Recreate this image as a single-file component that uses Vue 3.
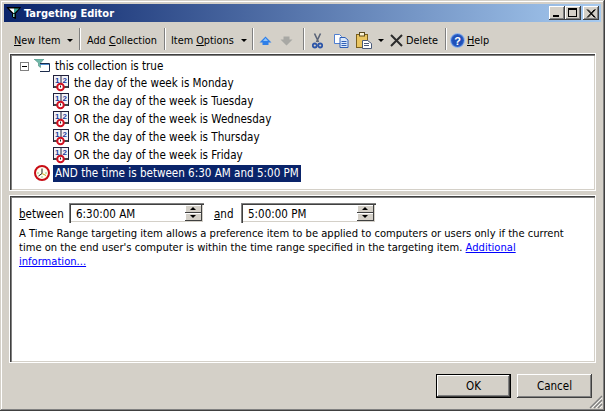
<script setup>
const days = [
  'the day of the week is Monday',
  'OR the day of the week is Tuesday',
  'OR the day of the week is Wednesday',
  'OR the day of the week is Thursday',
  'OR the day of the week is Friday'
]
</script>

<template>
  <div class="win">
    <div class="title">
      <svg class="ticon" width="16" height="16" viewBox="0 0 16 16">
        <path d="M1 2.500h13.500L9.500 8.500v5L6.500 12V8.500z" fill="#000" stroke="#000" stroke-width="1"/>
        <path d="M3 3.500h5L8 8.500z" fill="#fff"/>
        <path d="M8 3.500h5L8 8.500z" fill="#38a898"/>
        <path d="M7 9h1.500v3H7z" fill="#7fd0c0"/>
      </svg>
      <span class="ttext">Targeting Editor</span>
      <div class="wbtns">
        <span class="wb"><i class="wmin"></i></span>
        <span class="wb"><i class="wmax"></i></span>
        <span class="wb close">
          <svg width="10" height="9" viewBox="0 0 10 9"><path d="M1 0.500L8.500 8.500M2 0.500L9.500 8.500M8.500 0.500L1 8.500M9.500 0.500L2 8.500" stroke="#000" stroke-width="1"/></svg>
        </span>
      </div>
    </div>

    <div class="toolbar">
      <span class="tb w1"><span><u>N</u>ew Item</span><i class="caret"></i></span>
      <span class="sep"></span>
      <span class="tb w2"><span>Add <u>C</u>ollection</span></span>
      <span class="sep"></span>
      <span class="tb w3"><span>Item <u>O</u>ptions</span><i class="caret"></i></span>
      <span class="sep"></span>
      <span class="tb w4">
        <svg width="13" height="10" viewBox="0 0 13 10"><path d="M6.500 0.500L12.500 6.500H9.500V9H3.500V6.500H0.500z" fill="#2f7fe8"/><path d="M6.500 2L9 5H4z" fill="#8fc4fa"/></svg>
        <svg width="13" height="10" viewBox="0 0 13 10"><path d="M3.500 0.500H9.500V3.500H12.500L6.500 9.500L0.500 3.500H3.500z" fill="#a8a8a4"/></svg>
      </span>
      <span class="sep"></span>
      <span class="tb w5">
        <svg class="ic" width="11" height="16" viewBox="0 0 11 16">
          <path d="M2.500 0.500L6.500 9M8.500 0.500L4.500 9" stroke="#5a6478" stroke-width="1.600" fill="none"/>
          <circle cx="2.800" cy="12.500" r="2" fill="none" stroke="#2d55a8" stroke-width="1.800"/>
          <circle cx="8.200" cy="12.500" r="2" fill="none" stroke="#2d55a8" stroke-width="1.800"/>
        </svg>
        <svg class="ic2" width="15" height="14" viewBox="0 0 15 14">
          <path d="M0.500 0.500H5.500L7.500 2.500V9.500H0.500z" fill="#fff" stroke="#4f7fd0"/>
          <path d="M6 3.500H11L14 6V13.500H6z" fill="#dbe9fb" stroke="#2f5fb5"/>
          <path d="M7.500 7.500H12.500M7.500 9.500H12.500M7.500 11.500H12.500" stroke="#2f5fb5"/>
        </svg>
        <svg class="ic3" width="16" height="17" viewBox="0 0 16 17">
          <rect x="0.500" y="2.500" width="11" height="13" fill="#eac560" stroke="#7a5f1c"/>
          <rect x="3.500" y="0.500" width="5" height="3.500" fill="#fbf3d2" stroke="#5a4a20"/>
          <path d="M6.500 8.500H11.500L15.500 11.500V16.500H6.500z" fill="#fff" stroke="#4a5a78"/>
          <path d="M8 11.500H13M8 13.500H13" stroke="#4a5a78"/>
        </svg>
        <i class="caret c2"></i>
        <svg class="ic4" width="13" height="13" viewBox="0 0 13 13"><path d="M1 1L12 12M12 1L1 12" stroke="#2c2c2c" stroke-width="2"/></svg>
        <span class="del">Delete</span>
      </span>
      <span class="sep"></span>
      <span class="tb w6">
        <svg width="15" height="15" viewBox="0 0 15 15">
          <circle cx="7.500" cy="7.500" r="7" fill="#2d62c8" stroke="#9dbcec" stroke-width="1"/>
          <circle cx="7.500" cy="7.500" r="5.300" fill="#1f4fb8"/>
          <text x="7.500" y="11.500" text-anchor="middle" font-size="11" font-weight="700" fill="#fff" font-family="Liberation Sans">?</text>
        </svg>
        <span class="help"><u>H</u>elp</span>
      </span>
    </div>

    <div class="body">
      <div class="panel tree">
        <div class="row root">
          <span class="expander"><i></i></span>
          <svg class="coll" width="16" height="13" viewBox="0 0 16 13">
            <path d="M0 0H10L6.500 4V8.500L4.500 7V4z" fill="#6fb8a8" stroke="#4d8c80" stroke-width="0.600"/>
            <path d="M6 4.500H15.500V12.500H6" fill="none" stroke="#1c2c4c" stroke-width="1"/>
            <path d="M6 5.500H15" stroke="#4f8fd0" stroke-width="1"/>
          </svg>
          <span class="lbl root-lbl">this collection is true</span>
        </div>
        <div v-for="d in days" :key="d" class="row item">
          <svg class="cal" width="16" height="17" viewBox="0 0 16 17">
            <rect x="0.500" y="0.500" width="15" height="12" fill="#f2f2f6" stroke="#20203c"/>
            <path d="M8 0.500V12.500" stroke="#20203c"/>
            <rect x="1" y="11" width="14" height="2" fill="#444"/>
            <text x="4.300" y="8" text-anchor="middle" font-size="8" font-weight="700" fill="#1c3c9c" font-family="Liberation Sans">1</text>
            <text x="11.800" y="8" text-anchor="middle" font-size="8" font-weight="700" fill="#1c3c9c" font-family="Liberation Sans">2</text>
            <circle cx="7.500" cy="12" r="3.300" fill="#fff" stroke="#d01020" stroke-width="2"/>
            <path d="M7.500 10.500V12.500" stroke="#222"/>
          </svg>
          <span class="lbl">{{ d }}</span>
        </div>
        <div class="row last">
          <svg class="clock" width="18" height="18" viewBox="0 0 18 18">
            <circle cx="9" cy="9" r="7" fill="#fffef0" stroke="#c80c14" stroke-width="2"/>
            <path d="M9 4.500V9.500L5.500 12" stroke="#202020" stroke-width="1" fill="none"/>
            <path d="M9 9.500L13 11.500" stroke="#c8a820" stroke-width="1" fill="none"/>
            <path d="M8.500 12.500h1v1h-1zM12.500 8.500h1v1h-1zM4.500 8.500h1v1h-1z" fill="#20a020"/>
          </svg>
          <span class="lbl sel">AND the time is between 6:30 AM and 5:00 PM</span>
        </div>
      </div>

      <div class="panel detail">
        <div class="fields">
          <span class="flab f1"><u>b</u>etween</span>
          <span class="spin"><span class="val">6:30:00 AM</span><span class="arrows"><b class="up"></b><b class="down"></b></span></span>
          <span class="flab f2"><u>a</u>nd</span>
          <span class="spin"><span class="val">5:00:00 PM</span><span class="arrows"><b class="up"></b><b class="down"></b></span></span>
        </div>
        <p class="desc">A Time Range targeting item allows a preference item to be applied to computers or users only if the current time on the end user's computer is within the time range specified in the targeting item. <a>Additional information...</a></p>
      </div>

      <div class="foot">
        <button class="btn ok">OK</button>
        <button class="btn">Cancel</button>
      </div>
    </div>
    <svg class="grip" width="14" height="14" viewBox="0 0 14 14">
      <path d="M13 1L1 13M13 5L5 13M13 9L9 13" stroke="#808080" stroke-width="1.400"/>
      <path d="M13 3L3 13M13 7L7 13M13 11L11 13" stroke="#fff" stroke-width="0.800"/>
    </svg>
  </div>
</template>

<style scoped>
.win {
  position: relative;
  box-sizing: border-box;
  width: 605px;
  height: 411px;
  padding: 4px;
  background: #d4d0c8;
  box-shadow: inset -1px -1px 0 #404040, inset 1px 1px 0 #d4d0c8, inset -2px -2px 0 #808080, inset 2px 2px 0 #fff;
  font-family: "DejaVu Sans", "Open Sans", sans-serif;
  font-stretch: condensed;
  font-size: 11.500px;
  color: #000;
  display: flex;
  flex-direction: column;
}
.title {
  height: 18px;
  background: linear-gradient(90deg, #0a246a, #a6caf0);
  display: flex;
  align-items: center;
  flex-shrink: 0;
}
.ticon { margin: 0 2px 0 2px; }
.ttext { color: #fff; font-weight: 700; font-size: 11px; }
.wbtns { margin-left: auto; display: flex; margin-right: 2px; }
.wb {
  box-sizing: border-box;
  width: 16px;
  height: 14px;
  background: #d4d0c8;
  box-shadow: inset -1px -1px 0 #404040, inset 1px 1px 0 #fff, inset -2px -2px 0 #808080;
  display: flex;
  align-items: center;
  justify-content: center;
  position: relative;
}
.wb.close { margin-left: 2px; }
.wmin { position: absolute; left: 4px; bottom: 3px; width: 6px; height: 2px; background: #000; }
.wmax { width: 9px; height: 9px; box-sizing: border-box; border: 1px solid #000; border-top-width: 2px; margin: -1px 0 0 -1px; }
.toolbar {
  height: 28px;
  margin-top: 3px;
  display: flex;
  align-items: center;
  flex-shrink: 0;
  font-size: 10.800px;
}
.tb { display: flex; align-items: center; box-sizing: border-box; height: 22px; white-space: nowrap; padding-top: 3px; }
.w1 { width: 75px; padding-left: 10px; }
.w2 { width: 83px; padding-left: 6px; }
.w3 { width: 86px; padding-left: 5px; }
.w4 { width: 49px; padding-left: 5px; gap: 8px; }
.w5 { width: 140px; padding-left: 7px; }
.w6 { width: 60px; padding-left: 3px; }
.sep { width: 2px; height: 22px; flex-shrink: 0; background: linear-gradient(90deg, #808080 50%, #fff 50%); }
.caret { width: 0; height: 0; border: 3px solid transparent; border-top: 3px solid #000; border-bottom: 0; margin-left: 7px; }
.ic2 { margin-left: 11px; }
.ic3 { margin-left: 7px; }
.c2 { margin-left: 6px; }
.ic4 { margin-left: 6px; }
.del { margin-left: 3px; }
.help { margin-left: 2px; }
.body { flex: 1; display: flex; flex-direction: column; padding: 1px 6px 0; min-height: 0; }
.panel {
  box-sizing: border-box;
  background: #fff;
  box-shadow: inset 1px 1px 0 #404040, inset 2px 2px 0 #808080, inset -1px -1px 0 #d4d0c8, 0 0 0 1px #fff;
}
.tree { height: 136px; padding: 3px 0 0 8px; flex-shrink: 0; font-size: 11.550px; }
.row { display: flex; align-items: center; height: 18px; position: relative; }
.root { height: 17px; }
.expander { width: 9px; height: 9px; box-sizing: border-box; border: 1px solid #808080; margin: 2px 0 0 2px; position: relative; }
.expander i { position: absolute; left: 1px; top: 3px; width: 5px; height: 1px; background: #000; }
.coll { margin-left: 5px; margin-top: 0; }
.item { padding-left: 35px; }
.cal { margin-top: 1px; }
.lbl { padding: 0 2px; margin-left: 2px; white-space: nowrap; line-height: 17px; }
.item .lbl { margin-left: 3px; }
.root-lbl { margin: 2px 0 0 3px; }
.last { padding-left: 15px; }
.clock { flex-shrink: 0; }
.sel { background: #0a246a; color: #fff; }
.detail { height: 166px; margin-top: 6px; padding: 7px 8px 0 9px; flex-shrink: 0; }
.fields { display: flex; align-items: center; height: 20px; }
.flab { padding-top: 1px; }
.f1 { width: 50px; }
.f2 { width: 37px; padding-left: 10px; box-sizing: border-box; }
.spin {
  box-sizing: border-box;
  width: 135px;
  height: 20px;
  background: #fff;
  box-shadow: inset 1px 1px 0 #808080, inset 2px 2px 0 #404040, inset -1px -1px 0 #fff, inset -2px -2px 0 #d4d0c8;
  display: flex;
  align-items: center;
  padding: 0 2px 0 7px;
}
.val { flex: 1; padding-top: 1px; }
.arrows { width: 17px; height: 16px; display: flex; flex-direction: column; }
.arrows b {
  flex: 1;
  position: relative;
  background: #d4d0c8;
  box-shadow: inset -1px -1px 0 #404040, inset 1px 1px 0 #fff;
}
.arrows b::after {
  content: "";
  position: absolute;
  left: 5px;
  top: 2px;
  border: 3px solid transparent;
}
.up::after { border-bottom-color: #000 !important; border-top: 0 !important; }
.down::after { border-top-color: #000 !important; border-bottom: 0 !important; }
.desc { margin: 4px 0 0; max-width: 552px; line-height: 14px; font-size: 11.100px; }
.desc a { color: #0000ff; text-decoration: underline; }
.foot { flex: 1; display: flex; justify-content: flex-end; align-items: flex-start; gap: 6px; padding: 12px 3px 0 0; }
.btn {
  box-sizing: border-box;
  width: 75px;
  height: 24px;
  background: #d4d0c8;
  border: 0;
  padding: 0;
  font: inherit;
  font-stretch: condensed;
  color: #000;
  box-shadow: inset -1px -1px 0 #404040, inset 1px 1px 0 #fff, inset -2px -2px 0 #808080;
}
.ok { box-shadow: inset 0 0 0 1px #000, inset -2px -2px 0 #404040, inset 2px 2px 0 #fff, inset -3px -3px 0 #808080; }
.grip { position: absolute; right: 2px; bottom: 2px; }
</style>

<style>
html, body { margin: 0; padding: 0; overflow: hidden; }
</style>
